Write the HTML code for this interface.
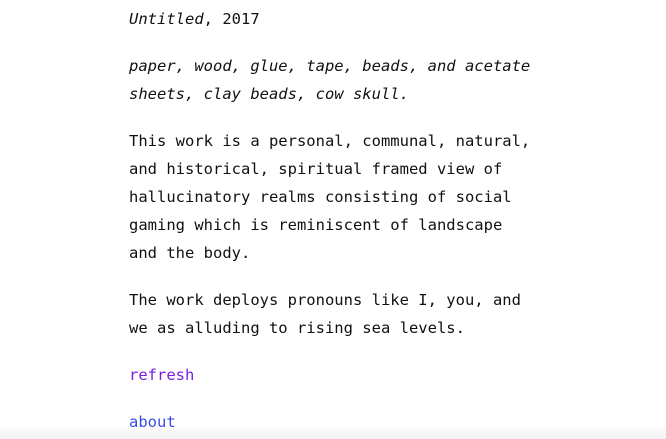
<!DOCTYPE html>
<html><head><style>
html,body{margin:0;padding:0;background:#fff;width:666px;height:439px;overflow:hidden;}
body{font-family:"DejaVu Sans Mono",monospace;font-size:15.5px;line-height:28px;color:#111;position:relative;}
.w{position:absolute;left:129px;top:5px;width:530px;}
p{margin:0 0 19px 0;white-space:nowrap;}
a{text-decoration:none;}
.r{color:#7a1ee0;}
.a{color:#3a4de0;}
.sh{position:absolute;left:0;right:0;bottom:0;height:14px;background:linear-gradient(rgba(0,0,0,0),rgba(0,0,0,0.06));}
</style></head><body>
<div class="w">
<p><i>Untitled</i>, 2017</p>
<p><i>paper, wood, glue, tape, beads, and acetate<br>sheets, clay beads, cow skull.</i></p>
<p>This work is a personal, communal, natural,<br>and historical, spiritual framed view of<br>hallucinatory realms consisting of social<br>gaming which is reminiscent of landscape<br>and the body.</p>
<p>The work deploys pronouns like I, you, and<br>we as alluding to rising sea levels.</p>
<p><a class="r">refresh</a></p>
<p><a class="a">about</a></p>
</div>
<div class="sh"></div>
</body></html>
